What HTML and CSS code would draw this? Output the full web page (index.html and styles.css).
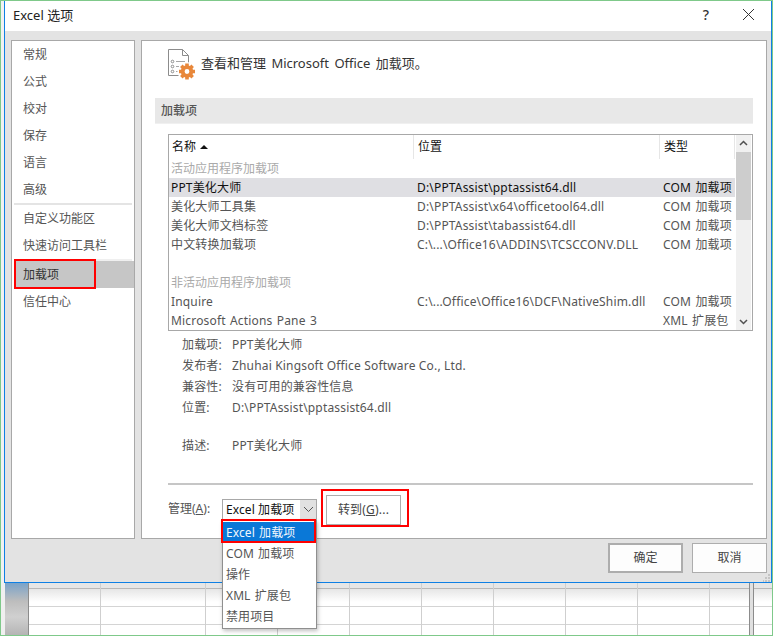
FILE: index.html
```html
<!DOCTYPE html>
<html lang="zh-CN">
<head>
<meta charset="utf-8">
<title>Excel 选项</title>
<link rel="stylesheet" href="styles.css">
</head>
<body>
<div class="screen">
  <div class="dialog">
    <header class="titlebar">
      <span class="title">Excel 选项</span>
      <span class="help">?</span>
      <svg class="close" width="13" height="13" viewBox="0 0 13 13"><path d="M1 1l11 11M12 1L1 12" stroke="#333" stroke-width="1" fill="none"/></svg>
    </header>
    <div class="panels">
      <nav class="nav">
        <div class="nav-item">常规</div>
        <div class="nav-item">公式</div>
        <div class="nav-item">校对</div>
        <div class="nav-item">保存</div>
        <div class="nav-item">语言</div>
        <div class="nav-item">高级</div>
        <div class="nav-sep"></div>
        <div class="nav-item">自定义功能区</div>
        <div class="nav-item">快速访问工具栏</div>
        <div class="nav-sep nav-sep-thin"></div>
        <div class="nav-item selected">加载项<span class="mark mark-nav"></span></div>
        <div class="nav-item">信任中心</div>
      </nav>
      <main class="content">
        <div class="heading">
          <svg class="heading-icon" width="30" height="31" viewBox="0 0 30 31">
            <path d="M.5 .5H14.5L20.5 6.5V26.5H.5Z" fill="#fff" stroke="#8c8c8c"/>
            <path d="M14.5 .5V6.5H20.5" fill="none" stroke="#8c8c8c"/>
            <circle cx="4.500" cy="12.500" r="1.300" fill="none" stroke="#8c8c8c"/>
            <circle cx="4.500" cy="17.500" r="1.300" fill="none" stroke="#8c8c8c"/>
            <circle cx="4.500" cy="22.500" r="1.300" fill="none" stroke="#8c8c8c"/>
            <path d="M8 12.500H17M8 17.500H11M8 22.500H10" stroke="#a6a6a6" fill="none"/>
            <circle cx="19" cy="22.500" r="9.500" fill="#fff"/>
            <g transform="translate(19 22.500)">
              <circle r="4.300" fill="none" stroke="#e8873a" stroke-width="3.800"/>
              <path d="M-1.800-8H1.800V-5H-1.800ZM-1.800 5H1.800V8H-1.800ZM-8-1.800H-5V1.800H-8ZM5-1.800H8V1.800H5Z" fill="#e8873a"/>
              <path d="M-1.800-8H1.800V-5H-1.800ZM-1.800 5H1.800V8H-1.800ZM-8-1.800H-5V1.800H-8ZM5-1.800H8V1.800H5Z" fill="#e8873a" transform="rotate(45)"/>
            </g>
          </svg>
          <span>查看和管理 Microsoft Office 加载项。</span>
        </div>
        <div class="section">加载项</div>
        <div class="list">
          <div class="list-main">
            <div class="row head">
              <div class="cell">名称 <span class="sort"></span></div>
              <div class="cell">位置</div>
              <div class="cell">类型</div>
            </div>
            <div class="group">活动应用程序加载项</div>
            <div class="row current"><div class="cell">PPT美化大师</div><div class="cell">D:\PPTAssist\pptassist64.dll</div><div class="cell">COM 加载项</div></div>
            <div class="row"><div class="cell">美化大师工具集</div><div class="cell">D:\PPTAssist\x64\officetool64.dll</div><div class="cell">COM 加载项</div></div>
            <div class="row"><div class="cell">美化大师文档标签</div><div class="cell">D:\PPTAssist\tabassist64.dll</div><div class="cell">COM 加载项</div></div>
            <div class="row"><div class="cell">中文转换加载项</div><div class="cell">C:\...\Office16\ADDINS\TCSCCONV.DLL</div><div class="cell">COM 加载项</div></div>
            <div class="row"></div>
            <div class="group">非活动应用程序加载项</div>
            <div class="row"><div class="cell">Inquire</div><div class="cell">C:\...Office\Office16\DCF\NativeShim.dll</div><div class="cell">COM 加载项</div></div>
            <div class="row"><div class="cell">Microsoft Actions Pane 3</div><div class="cell"></div><div class="cell">XML 扩展包</div></div>
          </div>
          <div class="scrollbar">
            <svg class="arrow" width="15" height="17" viewBox="0 0 15 17"><path d="M4 10l3.500-3.500L11 10" fill="none" stroke="#505050" stroke-width="1.500"/></svg>
            <div class="thumb"></div>
            <svg class="arrow arrow-end" width="15" height="17" viewBox="0 0 15 17"><path d="M4 7l3.500 3.500L11 7" fill="none" stroke="#505050" stroke-width="1.500"/></svg>
          </div>
        </div>
        <dl class="details">
          <dt>加载项:</dt><dd>PPT美化大师</dd>
          <dt>发布者:</dt><dd>Zhuhai Kingsoft Office Software Co., Ltd.</dd>
          <dt>兼容性:</dt><dd>没有可用的兼容性信息</dd>
          <dt>位置:</dt><dd>D:\PPTAssist\pptassist64.dll</dd>
          <dt class="desc">描述:</dt><dd class="desc">PPT美化大师</dd>
        </dl>
        <div class="rule"></div>
        <div class="manage">
          <span class="manage-label">管理(<u>A</u>):</span>
          <div class="select">
            <span class="select-value">Excel 加载项</span>
            <span class="select-btn"><svg width="11" height="7" viewBox="0 0 11 7"><path d="M1 1l4.500 4.500L10 1" fill="none" stroke="#555" stroke-width="1"/></svg></span>
            <div class="menu">
              <div class="menu-item active">Excel 加载项<span class="mark mark-menu"></span></div>
              <div class="menu-item">COM 加载项</div>
              <div class="menu-item">操作</div>
              <div class="menu-item">XML 扩展包</div>
              <div class="menu-item">禁用项目</div>
            </div>
          </div>
          <div class="go">转到(<u>G</u>)...<span class="mark mark-go"></span></div>
        </div>
      </main>
    </div>
    <footer class="footer">
      <div class="btn default">确定</div>
      <div class="btn">取消</div>
      <svg class="grip" width="8" height="8" viewBox="0 0 8 8"><path d="M5 0h2v2H5zM2 3h2v2H2zM5 3h2v2H5zM0 6h1v2H0zM2 6h2v2H2zM5 6h2v2H5z" fill="#c4c4c4"/></svg>
    </footer>
  </div>
  <div class="sheet">
    <div class="sheet-gutter"></div>
    <div class="sheet-rowhead"></div>
    <div class="col col-first"></div>
    <div class="col col-wide"></div>
    <div class="col"></div>
    <div class="col"></div>
    <div class="col"></div>
    <div class="col"></div>
    <div class="col"></div>
    <div class="col"></div>
    <div class="col"></div>
    <div class="col col-last"></div>
    <div class="sheet-scroll"></div>
  </div>
</div>
</body>
</html>
```
FILE: styles.css
```css
* { box-sizing: border-box; }
html, body { margin: 0; padding: 0; }
body {
  width: 773px;
  height: 636px;
  overflow: hidden;
  font-family: "Noto Sans", "Noto Sans CJK SC", sans-serif;
  font-size: 12px;
  color: #444;
}
.screen {
  width: 773px;
  height: 636px;
  border: 1px solid #7fc98a;
  display: flex;
  flex-direction: column;
  background: #f2f2f2;
}
.dialog {
  position: relative;
  z-index: 2;
  margin-left: 3px;
  height: 582px;
  flex: none;
  background: #e3e3e3;
  border: 1px solid #0f80e4;
  border-top: 0;
  display: flex;
  flex-direction: column;
}
.titlebar {
  height: 30px;
  background: #fff;
  display: flex;
  align-items: center;
  padding: 0 16px 3px 8px;
  flex: none;
}
.title { font-size: 13px; color: #222; flex: 1; }
.help { font-size: 14px; color: #333; margin-right: 33px; font-weight: 500; }
.panels {
  display: flex;
  gap: 6px;
  padding: 9px 4px 0 6px;
  height: 508px;
  flex: none;
}
.nav {
  width: 124px;
  height: 499px;
  border: 1px solid #a8a8a8;
  background: #fff;
  padding-left: 2px;
  flex: none;
}
.nav-item {
  position: relative;
  height: 27px;
  line-height: 27px;
  padding-left: 9px;
  color: #555;
}
.nav-sep { height: 2px; margin: 0 2px 0 0; background: #e4e4e4; }
.nav-sep-thin { background: #efefef; }
.selected { background: #c6c6c6; color: #333; }
.mark { position: absolute; border: 2px solid #f00; pointer-events: none; }
.mark-nav { left: 0; top: -2px; width: 82px; height: 30px; }
.content {
  flex: 1;
  height: 499px;
  border: 1px solid #a8a8a8;
  background: #fff;
  padding: 0 13px;
  display: flex;
  flex-direction: column;
}
.heading {
  height: 57px;
  flex: none;
  display: flex;
  align-items: flex-start;
  padding: 8px 0 0 13px;
  font-size: 13px;
  word-spacing: 2px;
  color: #333;
}
.heading span { margin: 4px 0 0 2px; line-height: 20px; }
.heading-icon { flex: none; margin-right: 1px; }
.section {
  height: 26px;
  line-height: 25px;
  padding-left: 6px;
  background: #e8e8e8;
  border-bottom: 1px solid #f0f0f0;
  color: #555;
  font-weight: 500;
  flex: none;
}
.list {
  margin: 10px 0 0 13px;
  height: 197px;
  flex: none;
  border: 1px solid #a8a8a8;
  display: flex;
  overflow: hidden;
}
.list-main { width: 566px; flex: none; }
.row {
  display: grid;
  grid-template-columns: 245px 246px 75px;
  height: 19px;
  line-height: 19px;
  white-space: nowrap;
}
.cell {
  padding-left: 2px;
  overflow: hidden;
  color: #555;
  letter-spacing: .17px;
  word-spacing: 1px;
}
.cell + .cell { padding-left: 3px; }
.head { height: 24px; line-height: 24px; }
.head .cell { color: #111; border-right: 1px solid #e6e6e6; letter-spacing: 0; }
.head .cell:first-child { padding-left: 3px; }
.head .cell + .cell { padding-left: 4px; }
.sort {
  display: inline-block;
  width: 0;
  height: 0;
  border: 4px solid transparent;
  border-top: 0;
  border-bottom: 4px solid #111;
  vertical-align: 2px;
}
.group { height: 19px; line-height: 19px; padding-left: 2px; color: #aaa; }
.current { background: #dfdfe3; }
.current .cell { color: #111; }
.scrollbar {
  width: 15px;
  margin-left: 1px;
  background: #f0f0f0;
  display: flex;
  flex-direction: column;
}
.arrow { flex: none; }
.thumb { height: 68px; background: #cdcdcd; width: 15px; flex: none; }
.arrow-end { margin-top: auto; }
.details {
  margin: 3px 0 0 27px;
  display: grid;
  grid-template-columns: 50px 1fr;
  grid-auto-rows: 21px;
  line-height: 21px;
  color: #555;
  letter-spacing: .17px;
  flex: none;
}
.details dt, .details dd { margin: 0; white-space: nowrap; }
.desc { margin-top: 17px !important; }
.rule {
  margin: 44px 0 0 13px;
  height: 2px;
  background: #c6c6c6;
  flex: none;
}
.manage {
  display: flex;
  align-items: flex-start;
  margin: 10px 0 0 13px;
  flex: none;
}
.manage-label { width: 54px; line-height: 28px; color: #555; }
.select {
  position: relative;
  width: 95px;
  height: 21px;
  margin-top: 4px;
  border: 1px solid #a8a8a8;
  display: flex;
  background: #fff;
}
.select-value {
  flex: 1;
  line-height: 19px;
  padding-left: 3px;
  color: #111;
  white-space: nowrap;
  letter-spacing: .1px;
}
.select-btn {
  width: 16px;
  flex: none;
  background: #e1e1e1;
  display: flex;
  align-items: center;
  justify-content: center;
}
.menu {
  position: absolute;
  left: -1px;
  top: 20px;
  width: 95px;
  height: 109px;
  padding-top: 1px;
  background: #fff;
  border: 1px solid #8f8f8f;
  box-shadow: 1px 2px 4px rgba(0,0,0,.25);
}
.menu-item {
  position: relative;
  height: 21px;
  line-height: 21px;
  padding-left: 3px;
  color: #555;
  white-space: nowrap;
  letter-spacing: .1px;
  word-spacing: 1px;
}
.active { background: #0a78d7; color: #f2f7fc; }
.mark-menu { left: -2px; top: -3px; width: 95px; height: 24px; }
.go {
  position: relative;
  margin-left: 9px;
  width: 75px;
  height: 30px;
  border: 1px solid #adadad;
  line-height: 28px;
  text-align: center;
  color: #444;
  letter-spacing: .2px;
}
.mark-go { left: -6px; top: -7px; width: 88px; height: 38px; }
.footer {
  position: relative;
  flex: 1;
  display: flex;
  justify-content: flex-end;
  gap: 9px;
  padding: 4px 4px 0 0;
}
.btn {
  width: 75px;
  height: 30px;
  border: 1px solid #adadad;
  background: #fdfdfd;
  line-height: 28px;
  text-align: center;
  color: #444;
}
.default { border-width: 2px; line-height: 26px; }
.grip { position: absolute; right: 0; bottom: 0; }
.sheet {
  flex: 1;
  display: flex;
  background:
    linear-gradient(#d4d4d4, #d4d4d4) 0 23px / 100% 1px no-repeat,
    linear-gradient(#d4d4d4, #d4d4d4) 0 41px / 100% 1px no-repeat,
    linear-gradient(#b8b8b8, #b8b8b8) 0 5px / 100% 1px no-repeat,
    linear-gradient(#e6e6e6, #e6e6e6) 0 0 / 100% 5px no-repeat,
    linear-gradient(#e6e6e6, #fff) 0 6px / 100% 13px no-repeat,
    #fff;
}
.sheet-gutter { width: 4px; flex: none; background: #f0f0f0; }
.sheet-rowhead {
  width: 24px;
  flex: none;
  background: linear-gradient(#7aa3c9, #bdbdbd 35%, #d0d0d0 65%, #b5b5b5);
  border-right: 1px solid #8c8c8c;
}
.col { width: 72px; flex: none; border-right: 1px solid #cfcfcf; }
.col-first { width: 72px; }
.col-wide { width: 105px; }
.col-last { width: 40px; border-right: 1px solid #8c8c8c; }
.sheet-scroll {
  width: 18px;
  flex: none;
  background: linear-gradient(90deg, #e0e0e0 3px, #8c8c8c 3px, #8c8c8c 4px, transparent 4px) no-repeat;
}
```
